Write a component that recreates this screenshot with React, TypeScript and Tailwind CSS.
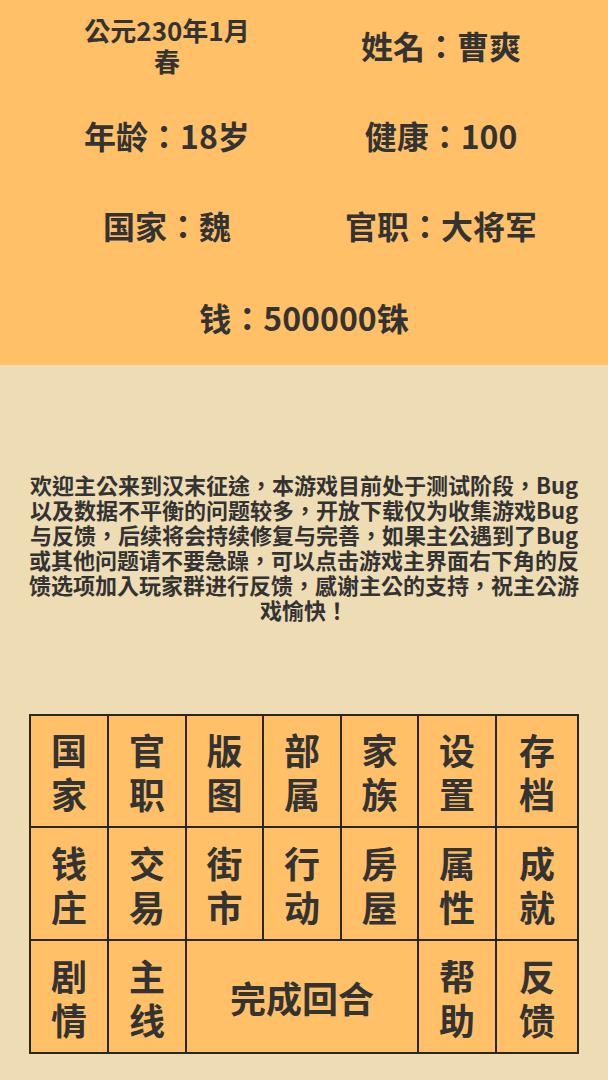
const FONT = { fontFamily: '"Noto Sans CJK TC", Roboto, "Noto Sans", sans-serif' };

const topRows: [string, string][] = [
  ["年龄：18岁", "健康：100"],
  ["国家：魏", "官职：大将军"],
];

const gridRows = [
  ["国家", "官职", "版图", "部属", "家族", "设置", "存档"],
  ["钱庄", "交易", "街市", "行动", "房屋", "属性", "成就"],
];

function Cell({ label }: { label: string }) {
  return (
    <button className="flex flex-col items-center justify-center border-x border-y-[1.5px] border-[#2a2620] bg-[#ffc068] text-[36px] font-semibold leading-[44px] text-[#333333]">
      <span>{label[0]}</span>
      <span>{label[1]}</span>
    </button>
  );
}

export default function App() {
  return (
    <div className="min-h-[1080px] w-full bg-[#eedcb5] text-[#333333]" style={FONT}>
      {/* 顶部信息 */}
      <div className="grid h-[365px] grid-cols-2 grid-rows-[90px_90px_90px_95px] bg-[#ffc068] px-[30px] font-semibold">
        <div className="flex flex-col items-center justify-center text-[26px] leading-[31px]">
          <span>公元230年1月</span>
          <span>春</span>
        </div>
        <div className="flex items-center justify-center text-[32px]">姓名：曹爽</div>
        {topRows.map(([a, b]) => (
          <>
            <div key={a} className="flex items-center justify-center text-[32px]">{a}</div>
            <div key={b} className="flex items-center justify-center text-[32px]">{b}</div>
          </>
        ))}
        <div className="col-span-2 flex items-center justify-center pb-[2px] text-[32px]">钱：500000铢</div>
      </div>

      {/* 公告 */}
      <p className="mx-auto mt-[107px] w-[556px] text-center text-[22px] font-semibold leading-[25px]">
        欢迎主公来到汉末征途，本游戏目前处于测试阶段，Bug以及数据不平衡的问题较多，开放下载仅为收集游戏Bug与反馈，后续将会持续修复与完善，如果主公遇到了Bug或其他问题请不要急躁，可以点击游戏主界面右下角的反馈选项加入玩家群进行反馈，感谢主公的支持，祝主公游戏愉快！
      </p>

      {/* 功能菜单 */}
      <div className="ml-[29px] mt-[92px] grid w-[550px] grid-cols-[78px_78px_77px_78px_77px_78px_1fr] grid-rows-[112px_113px_113px] border border-[#2a2620]">
        {gridRows.flat().map((l) => (
          <Cell key={l} label={l} />
        ))}
        <Cell label="剧情" />
        <Cell label="主线" />
        <button className="col-span-3 flex items-center justify-center border-x border-y-[1.5px] border-[#2a2620] bg-[#ffc068] text-[36px] font-semibold text-[#333333]">
          完成回合
        </button>
        <Cell label="帮助" />
        <Cell label="反馈" />
      </div>
    </div>
  );
}
